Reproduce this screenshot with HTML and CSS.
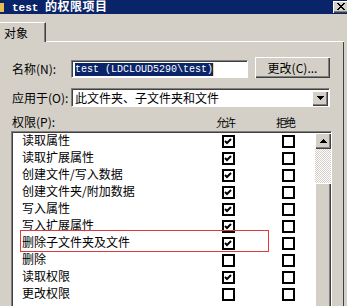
FILE: index.html
```html
<!DOCTYPE html>
<html lang="zh-CN">
<head>
    <meta charset="UTF-8">
    <meta name="viewport" content="width=device-width, initial-scale=1.0">
    <title>test 的权限项目</title>
    <link rel="stylesheet" href="styles.css">
</head>
<body>
    <div class="titlebar">
        <span class="folder"></span>
        <span class="title"><span class="mono">test </span>的权限项目</span>
        <button class="close">
            <svg width="8" height="7" viewBox="0 0 8 7" shape-rendering="crispEdges"><path d="M0 0h2v1h-2zM6 0h2v1h-2zM1 1h2v1h-2zM5 1h2v1h-2zM2 2h4v1h-4zM3 3h2v1h-2zM2 4h4v1h-4zM1 5h2v1h-2zM5 5h2v1h-2zM0 6h2v1h-2zM6 6h2v1h-2z" fill="#000"/></svg>
        </button>
    </div>

    <div class="tabs">
        <div class="tab">对象</div>
        <div class="tab-fill"></div>
    </div>

    <div class="panel">
        <div class="field name-field">
            <span class="label">名称(N):</span>
            <div class="textbox"><span class="sel">test (LDCLOUD5290\test)</span><span class="caret"></span></div>
            <button class="btn">更改(C)...</button>
        </div>

        <div class="field apply-field">
            <span class="label">应用于(O):</span>
            <div class="combo">
                <span class="combo-text">此文件夹、子文件夹和文件</span>
                <span class="drop">
                    <svg width="7" height="4" viewBox="0 0 7 4" shape-rendering="crispEdges"><path d="M0 0h7v1h-7zM1 1h5v1h-5zM2 2h3v1h-3zM3 3h1v1h-1z" fill="#000"/></svg>
                </span>
            </div>
        </div>

        <div class="head">
            <span class="head-name">权限(P):</span>
            <span class="head-col">允许</span>
            <span class="head-col">拒绝</span>
        </div>

        <div class="list">
            <div class="rows">
                <div class="row"><span class="name">读取属性</span><span class="cb on"><svg width="9" height="9" viewBox="0 0 9 9"><path d="M1 4l2 2 4-4" fill="none" stroke="#000" stroke-width="2"/></svg></span><span class="cb"></span></div>
                <div class="row"><span class="name">读取扩展属性</span><span class="cb on"><svg width="9" height="9" viewBox="0 0 9 9"><path d="M1 4l2 2 4-4" fill="none" stroke="#000" stroke-width="2"/></svg></span><span class="cb"></span></div>
                <div class="row"><span class="name">创建文件/写入数据</span><span class="cb on"><svg width="9" height="9" viewBox="0 0 9 9"><path d="M1 4l2 2 4-4" fill="none" stroke="#000" stroke-width="2"/></svg></span><span class="cb"></span></div>
                <div class="row"><span class="name">创建文件夹/附加数据</span><span class="cb on"><svg width="9" height="9" viewBox="0 0 9 9"><path d="M1 4l2 2 4-4" fill="none" stroke="#000" stroke-width="2"/></svg></span><span class="cb"></span></div>
                <div class="row"><span class="name">写入属性</span><span class="cb on"><svg width="9" height="9" viewBox="0 0 9 9"><path d="M1 4l2 2 4-4" fill="none" stroke="#000" stroke-width="2"/></svg></span><span class="cb"></span></div>
                <div class="row"><span class="name">写入扩展属性</span><span class="cb on"><svg width="9" height="9" viewBox="0 0 9 9"><path d="M1 4l2 2 4-4" fill="none" stroke="#000" stroke-width="2"/></svg></span><span class="cb"></span></div>
                <div class="row"><span class="name">删除子文件夹及文件</span><span class="cb on"><svg width="9" height="9" viewBox="0 0 9 9"><path d="M1 4l2 2 4-4" fill="none" stroke="#000" stroke-width="2"/></svg></span><span class="cb"></span></div>
                <div class="row"><span class="name">删除</span><span class="cb"></span><span class="cb"></span></div>
                <div class="row"><span class="name">读取权限</span><span class="cb on"><svg width="9" height="9" viewBox="0 0 9 9"><path d="M1 4l2 2 4-4" fill="none" stroke="#000" stroke-width="2"/></svg></span><span class="cb"></span></div>
                <div class="row"><span class="name">更改权限</span><span class="cb"></span><span class="cb"></span></div>
                <div class="mark"></div>
            </div>
            <div class="scrollbar">
                <div class="sb-btn">
                    <svg width="7" height="4" viewBox="0 0 7 4" shape-rendering="crispEdges"><path d="M3 0h1v1h-1zM2 1h3v1h-3zM1 2h5v1h-5zM0 3h7v1h-7z" fill="#000"/></svg>
                </div>
                <div class="sb-track"></div>
                <div class="sb-thumb"></div>
            </div>
        </div>
    </div>
</body>
</html>
```

FILE: styles.css
```css
body{
    margin: 0;
    width: 347px;
    height: 306px;
    overflow: hidden;
    background: #d4d0c8;
    font-family: "Noto Sans CJK SC", sans-serif;
    font-size: 12px;
    color: #000;
}

/* title bar */
.titlebar{
    height: 14px;
    background: #0a246a;
    display: flex;
    align-items: center;
    color: #fff;
}
.folder{
    width: 4px;
    height: 9px;
    background: #e8c050;
    margin-right: 8px;
}
.title{
    flex: 1;
    font-family: "Liberation Sans", "Noto Sans CJK SC", sans-serif;
    font-weight: bold;
    font-size: 12px;
    line-height: 14px;
    white-space: pre;
    letter-spacing: 0.5px;
}
.mono{
    font-family: "Liberation Mono", monospace;
    font-size: 11px;
    letter-spacing: 0;
}
.close{
    width: 16px;
    height: 12px;
    margin: 0 -2px 1px 0;
    padding: 0;
    background: #d4d0c8;
    border: none;
    box-shadow: inset 1px 1px #fff, inset -1px -1px #404040, inset -2px -2px #808080;
    display: flex;
    align-items: center;
    justify-content: center;
}

/* tab strip */
.tabs{
    height: 28px;
    display: flex;
    align-items: flex-end;
    width: 344px;
}
.tab{
    width: 46px;
    height: 20px;
    box-sizing: border-box;
    border-top: 1px solid #fff;
    border-right: 1px solid #404040;
    box-shadow: inset -1px 0 #808080;
    padding-left: 4px;
    line-height: 20px;
}
.tab-fill{
    flex: 1;
    border-bottom: 1px solid #fff;
}

.panel{
    width: 344px;
    height: 270px;
    box-sizing: border-box;
    border-right: 1px solid #404040;
    padding-top: 15px;
}

/* name / apply rows */
.field{
    display: flex;
    align-items: flex-end;
    padding-left: 12px;
}
.label{
    width: 59px;
    line-height: 18px;
}
.name-field{
    height: 21px;
}
.textbox{
    width: 177px;
    height: 18px;
    box-sizing: border-box;
    background: #fff;
    border-top: 1px solid #808080;
    border-left: 1px solid #808080;
    border-right: 1px solid #fff;
    border-bottom: 1px solid #fff;
    box-shadow: inset 1px 1px #404040;
    padding: 2px 0 0 3px;
    display: flex;
    align-items: flex-start;
}
.sel{
    background: #0a246a;
    color: #fff;
    font-family: "Liberation Mono", monospace;
    font-size: 10px;
    line-height: 13px;
    white-space: nowrap;
}
.caret{
    width: 1px;
    height: 13px;
    background: #f5d56a;
}
.btn{
    margin-left: 7px;
    width: 75px;
    height: 21px;
    padding: 0;
    background: #d4d0c8;
    border: none;
    box-shadow: inset 1px 1px #fff, inset -1px -1px #404040, inset -2px -2px #808080;
    font-family: "Noto Sans CJK SC", sans-serif;
    font-size: 12px;
    color: #000;
}

.apply-field{
    margin-top: 10px;
    height: 19px;
}
.combo{
    width: 259px;
    height: 19px;
    box-sizing: border-box;
    background: #fff;
    border-top: 1px solid #808080;
    border-left: 1px solid #808080;
    border-right: 1px solid #fff;
    border-bottom: 1px solid #fff;
    box-shadow: inset 1px 1px #404040;
    display: flex;
    align-items: center;
    padding: 1px 1px 0 3px;
}
.combo-text{
    flex: 1;
    line-height: 16px;
}
.drop{
    width: 16px;
    height: 15px;
    background: #d4d0c8;
    box-shadow: inset 1px 1px #fff, inset -1px -1px #404040, inset -2px -2px #808080;
    display: flex;
    align-items: center;
    justify-content: center;
}

/* permission list */
.head{
    display: flex;
    height: 14px;
    margin-top: 8px;
    padding-left: 12px;
    line-height: 14px;
}
.head-name{
    width: 204px;
}
.head-col{
    width: 60px;
    font-size: 11px;
    letter-spacing: -2px;
}
.list{
    margin: 2px 0 0 11px;
    width: 321px;
    height: 180px;
    box-sizing: border-box;
    border-top: 1px solid #808080;
    border-left: 1px solid #808080;
    border-right: 1px solid #fff;
    border-bottom: 1px solid #fff;
    box-shadow: inset 1px 1px #404040;
    background: #fff;
    display: flex;
    padding: 1px 0 0 1px;
}
.rows{
    flex: 1;
    position: relative;
}
.row{
    height: 17px;
    display: flex;
    align-items: center;
    padding-left: 9px;
}
.name{
    width: 200px;
    white-space: nowrap;
    line-height: 14px;
    margin-bottom: 3px;
}
.cb{
    width: 13px;
    height: 13px;
    box-sizing: border-box;
    border: 2px solid #000;
    background: #fff;
    display: flex;
    align-items: center;
    justify-content: center;
}
.cb + .cb{
    margin-left: 47px;
}
.mark{
    position: absolute;
    left: 7px;
    top: 97px;
    width: 249px;
    height: 22px;
    box-sizing: border-box;
    border: 1px solid #e0383c;
}

.scrollbar{
    width: 16px;
    display: flex;
    flex-direction: column;
}
.sb-btn{
    height: 16px;
    background: #d4d0c8;
    box-shadow: inset 1px 1px #fff, inset -1px -1px #404040, inset -2px -2px #808080;
    display: flex;
    align-items: center;
    justify-content: center;
}
.sb-track{
    height: 34px;
    background: repeating-conic-gradient(#fff 0 25%, #d4d0c8 0 50%) 0 0 / 2px 2px;
}
.sb-thumb{
    flex: 1;
    background: #d4d0c8;
    box-shadow: inset 1px 1px #fff, inset -1px 0 #404040, inset -2px 0 #808080;
}
```
